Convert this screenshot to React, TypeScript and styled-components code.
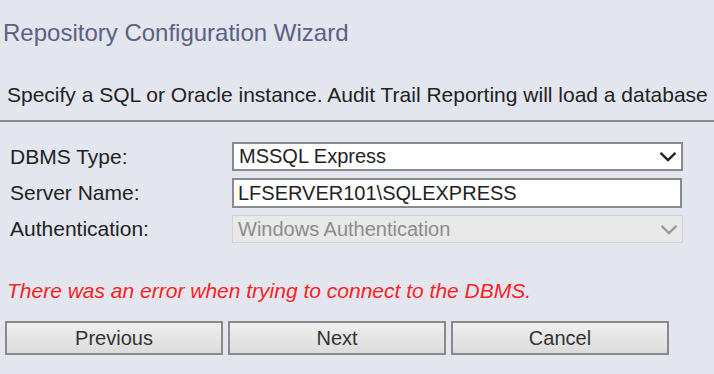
import { FC } from 'react';
import { createGlobalStyle, styled } from 'styled-components';

const GlobalStyle = createGlobalStyle`
  html, body {
    margin: 0;
    padding: 0;
    background: #e4e6ef;
  }
  body {
    font-family: 'Liberation Sans', Arial, sans-serif;
    color: #222;
    overflow: hidden;
  }
`;

const Chevron: FC<{ $muted?: boolean }> = ({ $muted }) => (
  <svg width="18" height="11" viewBox="0 0 18 11">
    <path
      d="M1.5 1.8 L9 9 L16.5 1.8"
      fill="none"
      stroke={$muted ? '#9a9a9a' : '#222'}
      strokeWidth="2.4"
    />
  </svg>
);

const App: FC = () => {
  const fields = [
    { id: 1, label: 'DBMS Type:', value: 'MSSQL Express', kind: 'select' },
    { id: 2, label: 'Server Name:', value: 'LFSERVER101\\SQLEXPRESS', kind: 'input' },
    { id: 3, label: 'Authentication:', value: 'Windows Authentication', kind: 'disabled' },
  ];

  return (
    <>
      <GlobalStyle />
      <S.Page>
        <S.Title>Repository Configuration Wizard</S.Title>
        <S.Description>
          Specify a SQL or Oracle instance. Audit Trail Reporting will load a database
        </S.Description>
        <S.Rule />
        <S.Form>
          {fields.map(f => (
            <S.Row key={f.id}>
              <S.Label>{f.label}</S.Label>
              {f.kind === 'input' ? (
                <S.TextBox>{f.value}</S.TextBox>
              ) : (
                <S.SelectBox $disabled={f.kind === 'disabled'}>
                  <span>{f.value}</span>
                  <Chevron $muted={f.kind === 'disabled'} />
                </S.SelectBox>
              )}
            </S.Row>
          ))}
        </S.Form>
        <S.Error>There was an error when trying to connect to the DBMS.</S.Error>
        <S.ButtonBar>
          <S.Button>Previous</S.Button>
          <S.Button>Next</S.Button>
          <S.Button>Cancel</S.Button>
        </S.ButtonBar>
      </S.Page>
    </>
  );
};

const S = {
  Page: styled.div`
    width: 714px;
    height: 374px;
    display: flex;
    flex-direction: column;
  `,

  Title: styled.h1`
    margin: 19px 0 0 3px;
    font-size: 24px;
    font-weight: 400;
    line-height: 28px;
    color: #5b6182;
  `,

  Description: styled.p`
    margin: 36px 0 0 7px;
    font-size: 21px;
    line-height: 24px;
    white-space: nowrap;
    overflow: hidden;
  `,

  Rule: styled.div`
    margin-top: 13px;
    height: 2px;
    background: #8a8a8a;
  `,

  Form: styled.div`
    margin-top: 20px;
    display: flex;
    flex-direction: column;
    gap: 7px;
  `,

  Row: styled.div`
    display: flex;
    align-items: center;
    padding-left: 10px;
  `,

  Label: styled.span`
    width: 222px;
    font-size: 21px;
  `,

  SelectBox: styled.div<{ $disabled: boolean }>`
    box-sizing: border-box;
    width: 451px;
    height: ${({ $disabled }) => ($disabled ? '28px' : '29px')};
    display: flex;
    align-items: center;
    justify-content: space-between;
    padding: 0 4px 0 5px;
    font-size: 20px;
    background: ${({ $disabled }) => ($disabled ? '#e9e9e9' : '#fff')};
    color: ${({ $disabled }) => ($disabled ? '#8c8c8c' : '#222')};
    border: ${({ $disabled }) => ($disabled ? '1px solid #d2d2d2' : '2px solid #8a8a8a')};
  `,

  TextBox: styled.div`
    box-sizing: border-box;
    width: 450px;
    height: 30px;
    display: flex;
    align-items: center;
    padding: 0 4px;
    font-size: 20px;
    background: #fff;
    border: 2px solid #8a8a8a;
  `,

  Error: styled.p`
    margin: 36px 0 0 7px;
    font-size: 21px;
    line-height: 24px;
    font-style: italic;
    color: #fb1f1f;
  `,

  ButtonBar: styled.div`
    margin: 18px 0 0 5px;
    display: flex;
    gap: 5px;
  `,

  Button: styled.button`
    box-sizing: border-box;
    width: 218px;
    height: 34px;
    font-family: inherit;
    font-size: 20px;
    color: #333;
    background: linear-gradient(#efefef, #dcdcdc);
    border: 2px solid #8a8a8a;
    border-radius: 0;
    padding: 0;
  `,
};

export default App;
